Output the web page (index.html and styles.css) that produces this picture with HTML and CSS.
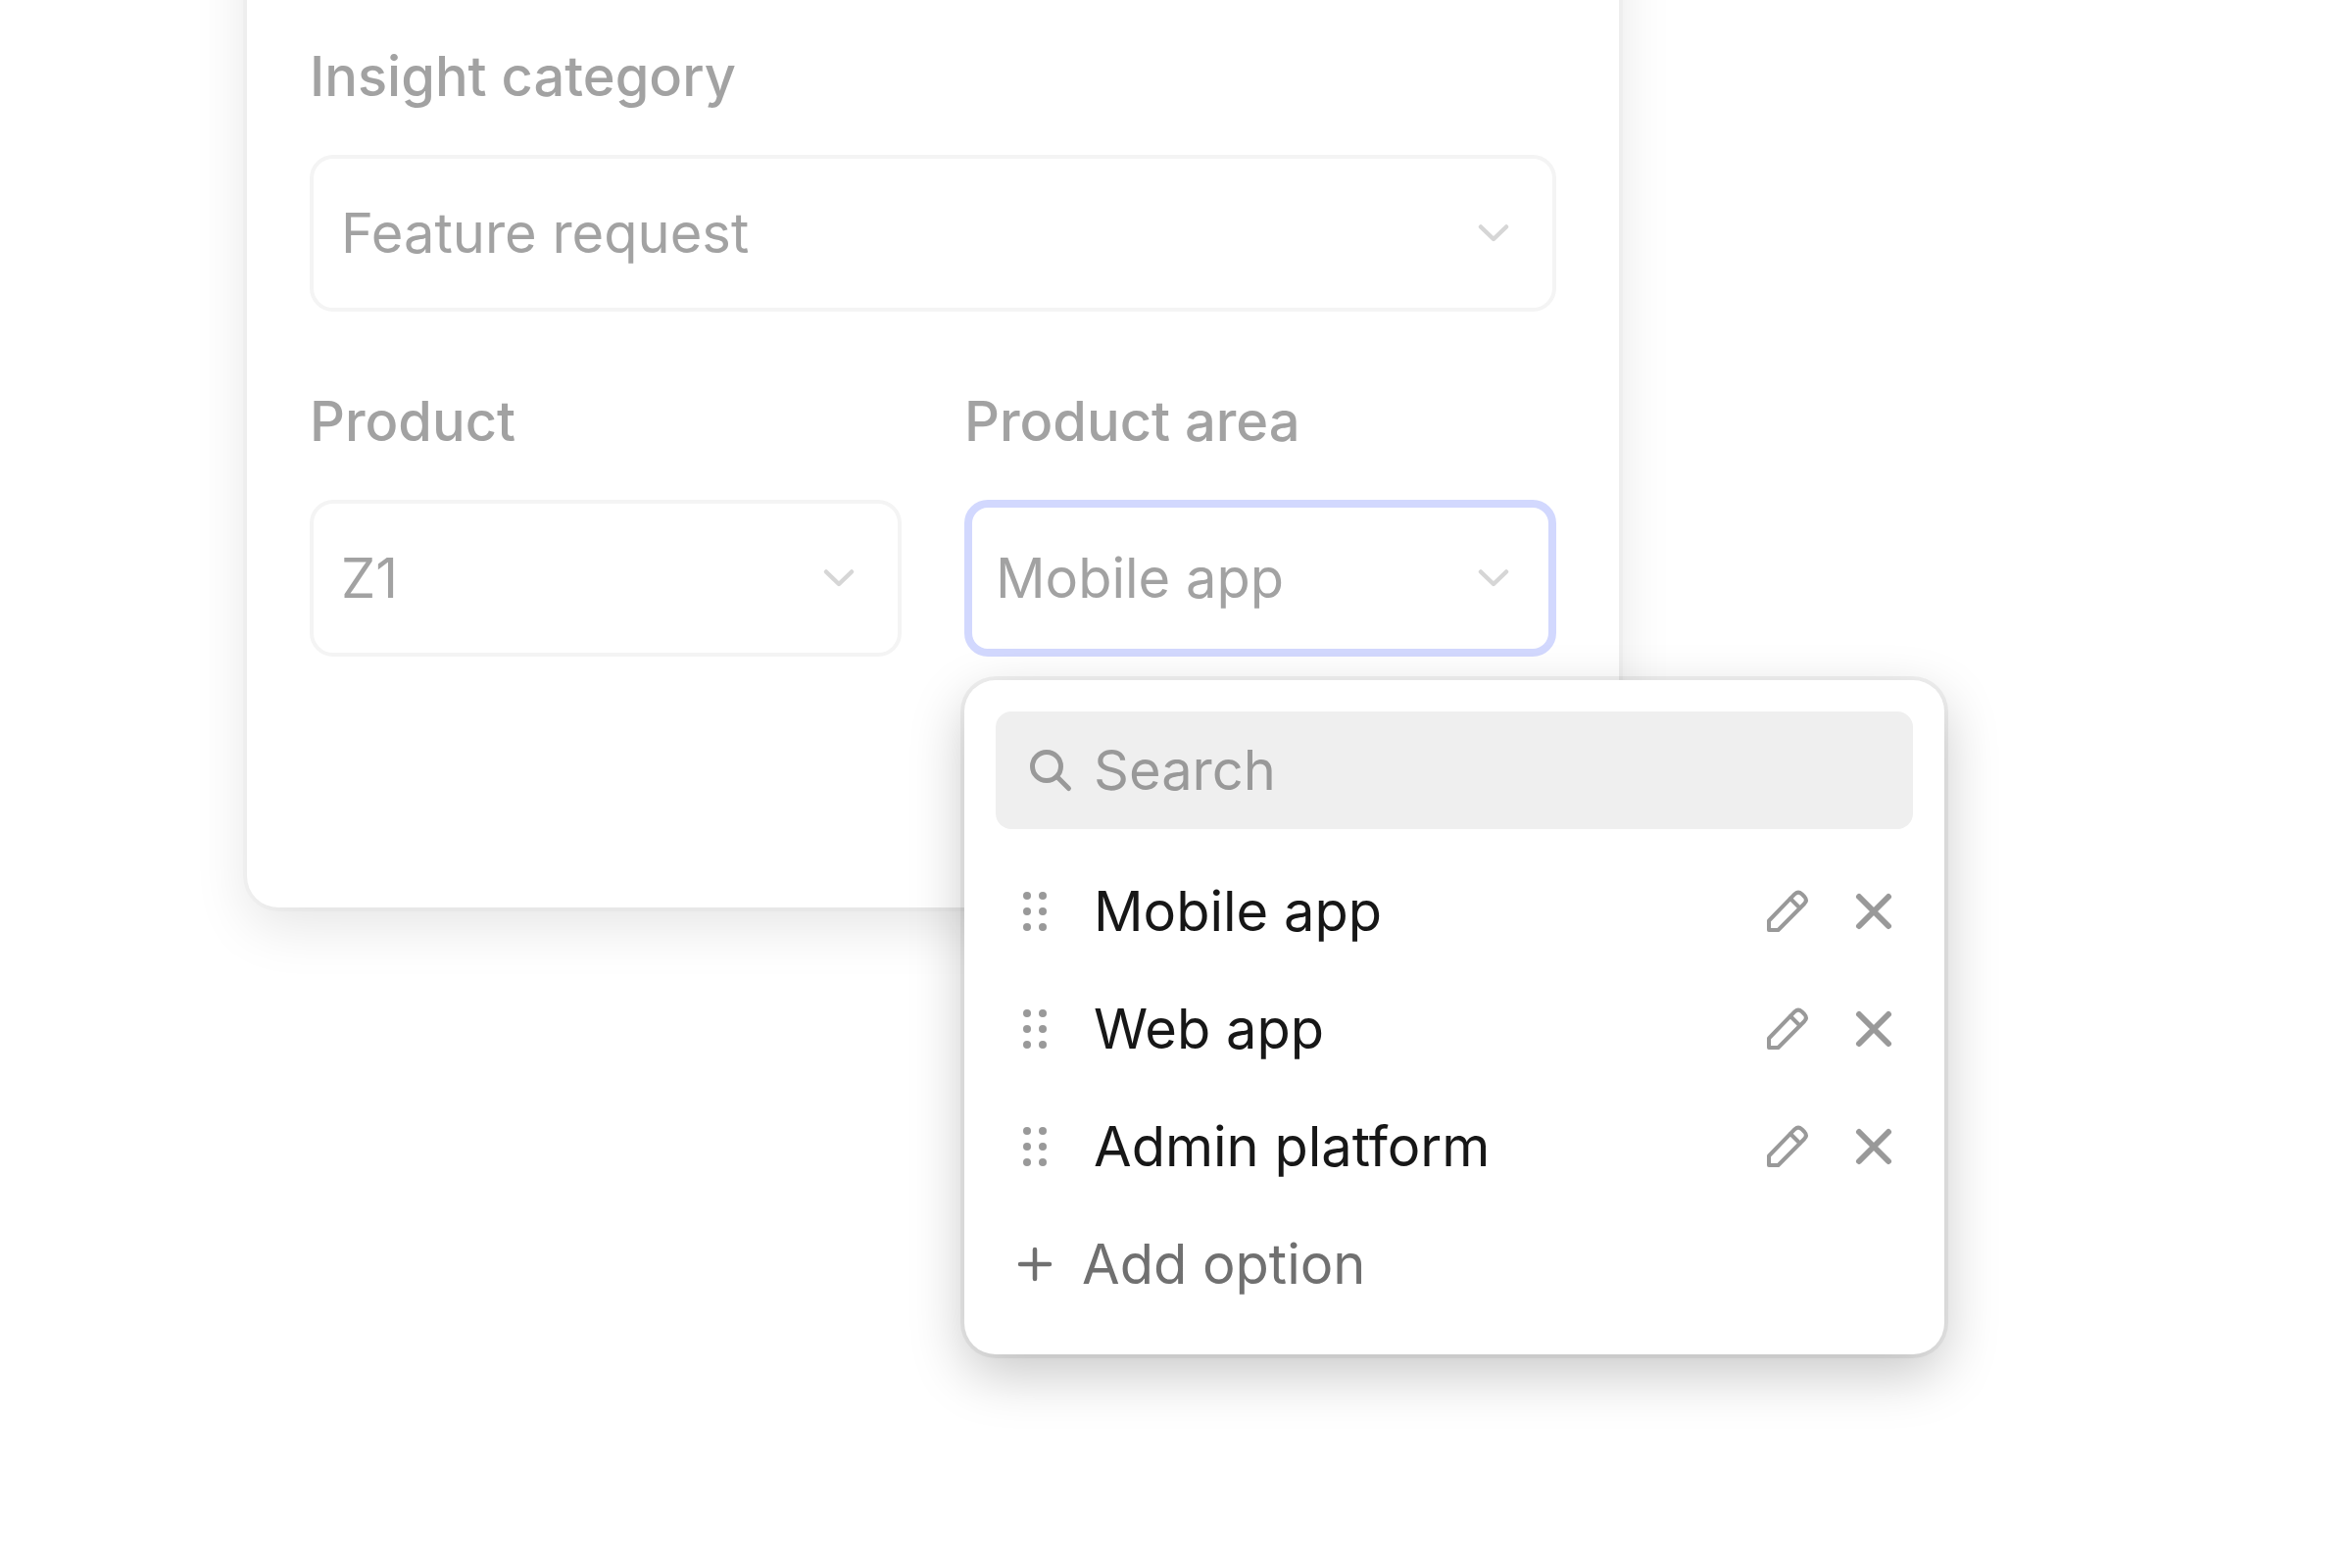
FILE: index.html
```html
<!DOCTYPE html>
<html lang="en">
<head>
    <meta charset="UTF-8">
    <meta name="viewport" content="width=device-width, initial-scale=1.0">
    <title>Insight category</title>
    <link rel="stylesheet" href="styles.css">
</head>
<body>

    <!-- Shared icons -->
    <svg class="sprite" aria-hidden="true">
        <symbol id="chevron" viewBox="0 0 64 64">
            <path d="M19 25.5L32 38L45 25.5" stroke-width="4.5"/>
        </symbol>
        <symbol id="search" viewBox="0 0 64 64">
            <circle cx="28" cy="28" r="14.5" stroke-width="5"/>
            <path d="M38.5 38.5L50.5 50.5" stroke-width="5"/>
        </symbol>
        <symbol id="drag" viewBox="0 0 64 64">
            <g fill="currentColor" stroke="none">
                <circle cx="24" cy="16" r="4"/>
                <circle cx="40" cy="16" r="4"/>
                <circle cx="24" cy="32" r="4"/>
                <circle cx="40" cy="32" r="4"/>
                <circle cx="24" cy="48" r="4"/>
                <circle cx="40" cy="48" r="4"/>
            </g>
        </symbol>
        <symbol id="pencil" viewBox="0 0 64 64">
            <path d="M13 51V41.5L39.5 14.2Q43 11 46.5 14.2L49.3 17Q52.5 20.5 49.3 24L22.5 51Z" stroke-width="4"/>
            <path d="M35 19L44.5 28.5" stroke-width="4"/>
        </symbol>
        <symbol id="close" viewBox="0 0 64 64">
            <path d="M17 17L47 47M47 17L17 47" stroke-width="6"/>
        </symbol>
        <symbol id="plus" viewBox="0 0 64 64">
            <path d="M32 17V47M17 32H47" stroke-width="4.5"/>
        </symbol>
    </svg>

    <main class="card">
        <form class="fields">
            <div class="field wide">
                <label for="category">Insight category</label>
                <div class="select">
                    <select id="category">
                        <option>Feature request</option>
                    </select>
                    <svg class="icon"><use href="#chevron"/></svg>
                </div>
            </div>

            <div class="field">
                <label for="product">Product</label>
                <div class="select">
                    <select id="product">
                        <option>Z1</option>
                    </select>
                    <svg class="icon"><use href="#chevron"/></svg>
                </div>
            </div>

            <div class="field">
                <label for="area">Product area</label>
                <div class="select active">
                    <select id="area">
                        <option>Mobile app</option>
                        <option>Web app</option>
                        <option>Admin platform</option>
                    </select>
                    <svg class="icon"><use href="#chevron"/></svg>

                    <!-- Options menu -->
                    <div class="menu">
                        <div class="search">
                            <svg class="icon"><use href="#search"/></svg>
                            <input type="search" placeholder="Search" aria-label="Search">
                        </div>
                        <ul class="options">
                            <li class="option">
                                <svg class="icon"><use href="#drag"/></svg>
                                <span class="name">Mobile app</span>
                                <button type="button" aria-label="Edit"><svg class="icon"><use href="#pencil"/></svg></button>
                                <button type="button" aria-label="Remove"><svg class="icon"><use href="#close"/></svg></button>
                            </li>
                            <li class="option">
                                <svg class="icon"><use href="#drag"/></svg>
                                <span class="name">Web app</span>
                                <button type="button" aria-label="Edit"><svg class="icon"><use href="#pencil"/></svg></button>
                                <button type="button" aria-label="Remove"><svg class="icon"><use href="#close"/></svg></button>
                            </li>
                            <li class="option">
                                <svg class="icon"><use href="#drag"/></svg>
                                <span class="name">Admin platform</span>
                                <button type="button" aria-label="Edit"><svg class="icon"><use href="#pencil"/></svg></button>
                                <button type="button" aria-label="Remove"><svg class="icon"><use href="#close"/></svg></button>
                            </li>
                        </ul>
                        <button type="button" class="add"><svg class="icon"><use href="#plus"/></svg>Add option</button>
                    </div>
                </div>
            </div>
        </form>
    </main>

</body>
</html>
```
FILE: styles.css
```css
* {
    margin: 0;
    padding: 0;
    box-sizing: border-box;
}
body {
    display: flow-root;
    min-height: 100vh;
    font-family: Inter, sans-serif;
    font-size: 56px;
    line-height: 96px;
    background: white;
}
select, input, button {
    font: inherit;
    color: inherit;
    background: none;
    border: none;
    outline: none;
    appearance: none;
}
button {
    display: flex;
    align-items: center;
    cursor: pointer;
}
.sprite {
    position: absolute;
    width: 0;
    height: 0;
}
.icon {
    display: block;
    flex: none;
    width: 64px;
    height: 64px;
    fill: none;
    stroke: currentColor;
    stroke-linecap: round;
    stroke-linejoin: round;
}

/* The top of the card runs off the page */
.card {
    max-width: 1400px;
    margin: -130px 0 0 10.5%;
    padding: 160px 64px 256px;
    background: white;
    border-radius: 32px;
    box-shadow: 0 0 0 4px rgba(0, 0, 0, 0.02), 0 20px 56px rgba(0, 0, 0, 0.1);
}
.fields {
    display: grid;
    grid-template-columns: 1fr 1fr;
    gap: 64px;
}
.field {
    display: flex;
    flex-direction: column;
    gap: 32px;
    color: #a2a2a2;
}
.wide {
    grid-column: 1 / -1;
}
label {
    font-weight: 500;
}
.select {
    position: relative;
}
.select select {
    display: block;
    width: 100%;
    height: 160px;
    padding: 0 96px 0 28px;
    border: 4px solid #f4f4f4;
    border-radius: 24px;
}
.select.active select {
    padding-left: 24px;
    border: 8px solid #d2d8fe;
}
.select > .icon {
    position: absolute;
    top: 48px;
    right: 32px;
    color: #d6d6d6;
    pointer-events: none;
}

.menu {
    position: absolute;
    top: calc(100% + 24px);
    left: 0;
    width: 1000px;
    padding: 32px;
    background: white;
    border-radius: 32px;
    box-shadow: 0 0 0 4px rgba(0, 0, 0, 0.05), 0 20px 56px rgba(0, 0, 0, 0.22);
    color: #999;
}
.search {
    display: flex;
    align-items: center;
    gap: 12px;
    height: 120px;
    margin-bottom: 24px;
    padding: 0 24px;
    background: #efefef;
    border-radius: 16px;
}
.search input {
    flex: 1;
    min-width: 0;
}
.search input::placeholder {
    color: #999;
    opacity: 1;
}
.options {
    list-style: none;
}
.option, .add {
    display: flex;
    align-items: center;
    gap: 24px;
    height: 120px;
    padding: 0 8px;
}
.name {
    flex: 1;
    padding-left: 4px;
    color: #171717;
}
.add {
    gap: 16px;
    color: #707070;
}
```
